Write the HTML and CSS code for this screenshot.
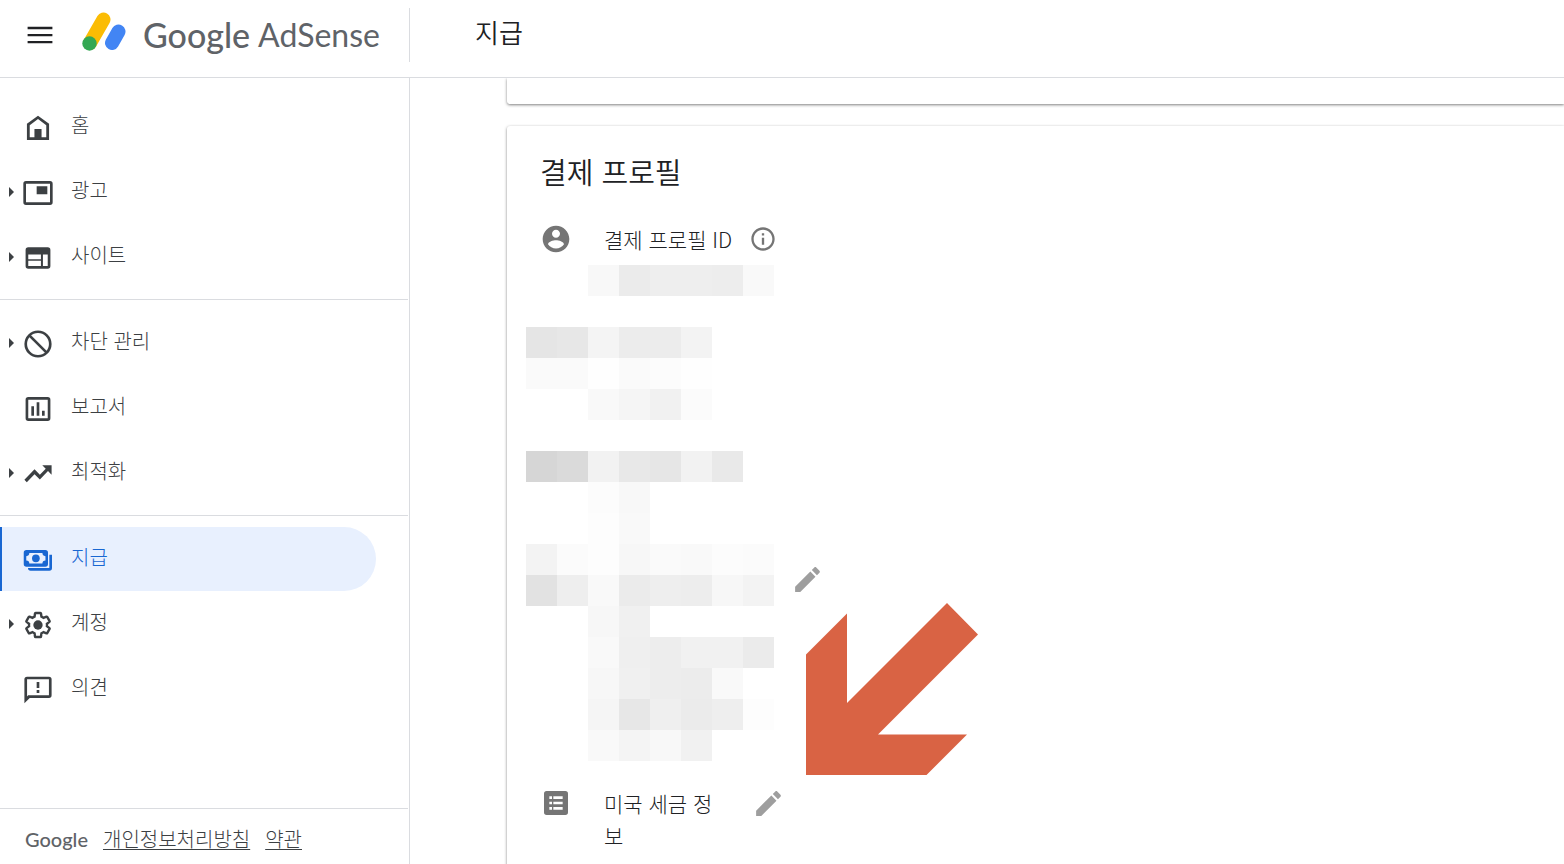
FILE: index.html
```html
<!DOCTYPE html>
<html lang="ko">
<head>
	<meta charset="utf-8">
	<title>Google AdSense - 지급</title>
	<link rel="stylesheet" href="styles.css">
</head>

<body>

<header class="header">
	<div class="brand">
		<button class="menu" type="button" aria-label="메뉴">
			<svg viewBox="0 0 24 24"><path d="M2.700 18.200h18.600v-1.700H2.700zm0-5.300h18.600v-1.700H2.700zM2.700 5.900v1.700h18.600V5.900z"/></svg>
		</button>
		<a class="logo" href="#">
			<svg viewBox="0 0 44 40">
				<path d="M8 31L21.500 7.500" stroke="#fbbc04" stroke-width="14" stroke-linecap="round"/>
				<path d="M30 31L36.500 19.500" stroke="#4285f4" stroke-width="14" stroke-linecap="round"/>
				<circle cx="7.500" cy="31.500" r="7.200" fill="#34a853"/>
			</svg>
			<b>Google</b>
			<span>AdSense</span>
		</a>
	</div>
	<h1>지급</h1>
</header>

<div class="wrap">
	<aside class="left">
		<nav>
			<ul>
				<li><a href="#">
					<i class="arrow"></i>
					<svg viewBox="0 0 24 24"><path fill-rule="evenodd" d="M3.700 21V8.900L12 2.800l8.300 6.100V21zM5.800 19h3.700v-6.200h5V19h3.700V9.900L12 5.300 5.800 9.900z"/><path d="M9.500 12.800h5V20h-5z"/></svg>
					<span>홈</span>
				</a></li>
				<li><a href="#">
					<i class="arrow on"></i>
					<svg viewBox="0 0 24 24"><path fill-rule="evenodd" d="M3 3h18a2 2 0 0 1 2 2v14a2 2 0 0 1-2 2H3a2 2 0 0 1-2-2V5a2 2 0 0 1 2-2zm0 2v14h18V5zM11 7h8v6h-8z"/></svg>
					<span>광고</span>
				</a></li>
				<li><a href="#">
					<i class="arrow on"></i>
					<svg viewBox="0 0 24 24"><path fill-rule="evenodd" d="M4.700 4h14.600a2 2 0 0 1 2 2v12a2 2 0 0 1-2 2H4.700a2 2 0 0 1-2-2V6a2 2 0 0 1 2-2zm0 5.300v3.600h9.500V9.300zm0 4.800V18h9.500v-3.900zM15.700 9.300V18h3.600V9.300z"/></svg>
					<span>사이트</span>
				</a></li>
			</ul>
			<ul>
				<li><a href="#">
					<i class="arrow on"></i>
					<svg viewBox="0 0 24 24"><g class="line"><circle cx="12" cy="12" r="9.200"/><path d="M5.500 5.500l13 13"/></g></svg>
					<span>차단 관리</span>
				</a></li>
				<li><a href="#">
					<i class="arrow"></i>
					<svg viewBox="0 0 24 24"><path fill-rule="evenodd" d="M4.700 3h14.600a2 2 0 0 1 2 2v14a2 2 0 0 1-2 2H4.700a2 2 0 0 1-2-2V5a2 2 0 0 1 2-2zm0 2v14h14.600V5zM7 10h2v7H7zM11 7h2v10h-2zM15 13.300h2V17h-2z"/></svg>
					<span>보고서</span>
				</a></li>
				<li><a href="#">
					<i class="arrow on"></i>
					<svg viewBox="0 0 24 24"><path d="M15.200 5.500l2.600 2.600-4.400 4.400-4-4L1.800 16.400l1.800 1.800 5.800-6 4 4 6.100-6.400 2.700 2.700v-7z"/></svg>
					<span>최적화</span>
				</a></li>
			</ul>
			<ul>
				<li class="active"><a href="#">
					<i class="arrow"></i>
					<svg viewBox="0 0 24 24"><path fill-rule="evenodd" d="M3.300 4.500h14.200a2 2 0 0 1 2 2V15a2 2 0 0 1-2 2H3.300a2 2 0 0 1-2-2V6.500a2 2 0 0 1 2-2zm2.200 2.300a2.300 2.300 0 0 1-2.300 2.300v3.300a2.300 2.300 0 0 1 2.300 2.300h9.800a2.300 2.300 0 0 1 2.300-2.300V9.100a2.300 2.300 0 0 1-2.300-2.300z"/><circle cx="10.400" cy="10.750" r="2.900"/><path d="M20.500 8h2v10a2 2 0 0 1-2 2H6.500a2 2 0 0 1-2-2h16z"/></svg>
					<span>지급</span>
				</a></li>
				<li><a href="#">
					<i class="arrow on"></i>
					<svg viewBox="0 0 24 24"><g class="line" transform="translate(1.200 1.200) scale(.9)"><path d="M19.430 12.980c.04-.32.07-.64.07-.98 0-.34-.03-.66-.07-.98l2.110-1.650c.19-.15.24-.42.12-.64l-2-3.460c-.09-.16-.26-.25-.44-.25-.06 0-.12.010-.17.030l-2.490 1c-.52-.4-1.080-.73-1.690-.98l-.38-2.650C14.460 2.180 14.250 2 14 2h-4c-.25 0-.46.18-.49.42l-.38 2.650c-.61.25-1.170.59-1.690.98l-2.490-1c-.06-.02-.12-.03-.18-.03-.17 0-.34.09-.43.25l-2 3.460c-.13.22-.07.49.12.64l2.110 1.650c-.04.32-.07.65-.07.98 0 .33.030.66.070.98l-2.110 1.650c-.19.15-.24.42-.12.64l2 3.460c.09.16.26.25.44.25.06 0 .12-.01.17-.03l2.490-1c.52.4 1.080.73 1.690.98l.38 2.650c.03.24.24.42.49.42h4c.25 0 .46-.18.49-.42l.38-2.650c.61-.25 1.170-.59 1.690-.98l2.490 1c.06.020.12.030.18.030.17 0 .34-.09.43-.25l2-3.460c.12-.22.07-.49-.12-.64z"/></g><circle cx="12" cy="12" r="3.500"/></svg>
					<span>계정</span>
				</a></li>
				<li><a href="#">
					<i class="arrow"></i>
					<svg viewBox="0 0 24 24"><path fill-rule="evenodd" d="M3.800 2h16.400a2 2 0 0 1 2 2v12a2 2 0 0 1-2 2H5.800l-4 4V4a2 2 0 0 1 2-2zm0 2v12.800l.8-.8h15.600V4z"/><path d="M11 6h2v4.500h-2zM11 12h2v2.200h-2z"/></svg>
					<span>의견</span>
				</a></li>
			</ul>
		</nav>
		<footer class="foot">
			<b>Google</b>
			<a href="#">개인정보처리방침</a>
			<a href="#">약관</a>
		</footer>
	</aside>

	<main class="right">
		<section class="card prev"></section>

		<section class="card">
			<h2>결제 프로필</h2>
			<div class="row">
				<svg class="ico" viewBox="0 0 24 24"><path d="M12 2C6.480 2 2 6.480 2 12s4.480 10 10 10 10-4.480 10-10S17.520 2 12 2zm0 3c1.660 0 3 1.340 3 3s-1.340 3-3 3-3-1.340-3-3 1.340-3 3-3zm0 14.200c-2.500 0-4.710-1.280-6-3.220.03-1.990 4-3.080 6-3.080 1.990 0 5.970 1.090 6 3.080-1.290 1.940-3.500 3.220-6 3.220z"/></svg>
				<span class="name">결제 프로필 ID</span>
				<button class="info" type="button" aria-label="도움말">
					<svg viewBox="0 0 24 24"><path d="M11 17h2v-6h-2v6zm1-15C6.480 2 2 6.480 2 12s4.480 10 10 10 10-4.480 10-10S17.520 2 12 2zm0 18c-4.410 0-8-3.590-8-8s3.590-8 8-8 8 3.590 8 8-3.590 8-8 8zM11 9h2V7h-2v2z"/></svg>
				</button>
			</div>

			<!-- 가려진 개인정보 -->
			<div class="mosaic" data-part="0"></div>
			<div class="masked">
				<div class="mosaic" data-part="1"></div>
				<button class="edit" type="button" aria-label="프로필 수정">
					<svg viewBox="0 0 24 24"><path d="M3 17.250V21h3.750L17.810 9.940l-3.750-3.750L3 17.250zM20.710 7.040c.39-.39.39-1.020 0-1.410l-2.340-2.340c-.39-.39-1.020-.39-1.410 0l-1.830 1.830 3.750 3.750 1.830-1.830z"/></svg>
				</button>
			</div>
			<div class="mosaic" data-part="2"></div>

			<div class="row tax">
				<svg class="ico" viewBox="0 0 24 24"><path fill-rule="evenodd" d="M5 3h14a2 2 0 0 1 2 2v14a2 2 0 0 1-2 2H5a2 2 0 0 1-2-2V5a2 2 0 0 1 2-2zm2 4v2h2V7zm3 0v2h7V7zm-3 4v2h2v-2zm3 0v2h7v-2zm-3 4v2h2v-2zm3 0v2h7v-2z"/></svg>
				<span class="name">미국 세금 정보</span>
				<button class="edit" type="button" aria-label="세금 정보 수정">
					<svg viewBox="0 0 24 24"><path d="M3 17.250V21h3.750L17.810 9.940l-3.750-3.750L3 17.250zM20.710 7.040c.39-.39.39-1.020 0-1.410l-2.340-2.340c-.39-.39-1.020-.39-1.410 0l-1.830 1.830 3.750 3.750 1.830-1.830z"/></svg>
				</button>
			</div>
		</section>

		<svg class="pointer" viewBox="0 0 174 175"><path d="M1 52.500L42 11.500V101L142 1l31 31.500L73 132.500h89L121.500 173H1z"/></svg>
	</main>
</div>

<script>
// 칸마다 회색 값, ff = 빈칸
var parts = [
	[
		'ff ff f8 eb ee ee ed f9',
		'ff ff ff ff ff ff ff ff',
		'e5 e7 f4 ec ec f3 ff ff',
		'fa fa fe fa fc fe ff ff',
		'ff ff f9 f5 f1 fb ff ff',
		'ff ff ff ff ff ff ff ff',
		'd6 da f2 e8 e6 f2 e9 ff',
		'ff ff fc f8 ff ff ff ff',
		'ff ff fd f9 ff ff ff ff'
	],
	[
		'f3 fb fd f7 fa f9 fc fb',
		'e2 ee f9 eb ee ed f7 f3'
	],
	[
		'ff ff f7 f0 ff ff ff ff',
		'ff ff f9 ef ed f1 f1 eb',
		'ff ff f7 f0 ed ec f9 ff',
		'ff ff f5 e7 ef eb ee fd',
		'ff ff f9 f4 f8 f1 ff ff'
	]
];
var box = document.querySelectorAll('.mosaic');
for(var i=0;i<box.length;i++){
	var cells = parts[box[i].getAttribute('data-part')].join(' ').split(' ');
	var str = '';
	for(var j=0;j<cells.length;j++){
		str += '<i style="background:#'+ cells[j] + cells[j] + cells[j] +'"></i>';
	}
	box[i].innerHTML = str;
}
</script>

</body>
</html>
```
FILE: styles.css
```css
*{ margin:0; padding:0; box-sizing: border-box;}
li{ list-style: none;}
a{ color: inherit; text-decoration: none;}
button{ border:0; background: none; color: inherit; cursor: pointer;}
svg{ display: block; flex: none; fill: currentColor;}
.line{ fill: none; stroke: currentColor; stroke-width: 2;}

body{ display: flex; flex-direction: column; height: 100vh; overflow: hidden; background:#fff; color:#202124; font-family: "Noto Sans CJK KR", sans-serif; font-size: 20px; font-weight: 300; line-height: 32px;}

/* header */
.header{ display: flex; flex: none; height: 78px; padding-top: 8px; border-bottom: 1px solid #dadce0;}
.brand{ display: flex; align-items: center; width: 410px; height: 54px; padding-left: 24px; border-right: 1px solid #dadce0;}
.menu svg{ width: 32px; height: 32px;}
.logo{ display: flex; align-items: center; margin-left: 26px; color:#5f6368; font-family: Lato, sans-serif; font-size: 34px; line-height: 54px;}
.logo svg{ width: 44px; height: 40px; margin-right: 17px; margin-bottom: 7px;}
.logo b{ margin-right: 8px; font-weight: 500;}
.logo span{ font-size: 32px; font-weight: 400;}
.header h1{ padding-left: 65px; font-size: 26px; font-weight: 350; line-height: 48px;}

.wrap{ display: flex; flex: 1; min-height: 0;}

/* left */
.left{ display: flex; flex-direction: column; flex: none; width: 410px; padding-right: 1px; border-right: 1px solid #dadce0; color:#3c4043;}
.left nav{ flex: 1; padding-top: 6px;}
.left ul{ display: grid; gap: 1px; padding: 11px 0 10px;}
.left ul + ul{ border-top: 1px solid #dadce0;}
.left li{ margin-right: 32px; border-left: 2px solid transparent; border-radius: 0 32px 32px 0;}
.left li a{ display: flex; align-items: center; height: 64px;}
.left li svg{ width: 32px; height: 32px; margin: 2px 17px 0 0;}
.left li span{ padding-bottom: 4px;}
.left li.active{ border-color:#1967d2; background:#e8f0fe; color:#1967d2;}
.arrow{ width: 5px; height: 10px; margin: 0 8px 0 7px;}
.arrow.on{ border: solid transparent; border-width: 5px 0 5px 5px; border-left-color:#3c4043;}

.foot{ display: flex; align-items: center; gap: 15px; height: 56px; padding: 4px 0 0 25px; border-top: 1px solid #dadce0;}
.foot b{ color:#5f6368; font-family: Lato, sans-serif; font-size: 20px; font-weight: 500;}
.foot a{ text-decoration: underline; text-decoration-thickness: 1px; text-underline-offset: 2px;}

/* right */
.right{ position: relative; flex: 1; padding-left: 97px; overflow: hidden;}
.card{ padding: 29px 19px; border-radius: 3px 0 0 3px; background:#fff; box-shadow: 0 1px 3px rgba(0,0,0,.5);}
.card.prev{ height: 26px; margin-bottom: 22px; padding: 0; border-radius: 0 0 0 3px;}
.card h2{ padding-left: 14px; font-size: 29px; font-weight: 350; line-height: 32px;}

.row{ display: flex; align-items: flex-start; padding-left: 14px;}
h2 + .row{ margin-top: 36px; margin-bottom: 10px;}
.row.tax{ margin-top: 26px;}
.name{ font-size: 21px;}
.ico{ width: 32px; height: 32px; margin-right: 32px; color:#757575;}
.info{ margin: 2px 0 0 17px; color:#757575;}
.info svg{ width: 28px; height: 28px;}
.edit{ color:#9e9e9e;}
.edit svg{ width: 33px; height: 33px;}
.tax .name{ width: 120px; margin-right: 28px;}

.masked{ display: flex;}
.masked .edit{ align-self: flex-start; margin: 19px 0 0 17px;}
.mosaic{ display: grid; grid-template-columns: repeat(8, 31px); grid-auto-rows: 31px; width: 248px;}

.pointer{ position: absolute; left: 395px; top: 524px; width: 174px; height: 175px; color:#d96344;}
```
